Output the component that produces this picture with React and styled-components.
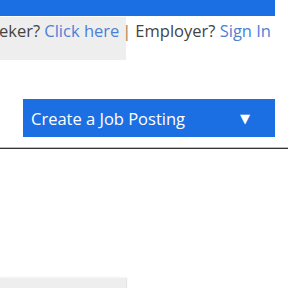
import styled, { createGlobalStyle } from "styled-components";

const GlobalStyle = createGlobalStyle`
  html, body { margin: 0; padding: 0; background: #fff; overflow: hidden; }
  body { font-family: "Open Sans", "DejaVu Sans", sans-serif; }
`;

const Page = styled.div`
  width: 288px;
  height: 288px;
  display: flex;
  flex-direction: column;
  overflow: hidden;
`;

const TopBar = styled.div`
  width: 275px;
  height: 16px;
  background: #1b6fe3;
  flex-shrink: 0;
`;

const Header = styled.div`
  display: grid;
  height: 44px;
  margin-top: 1px;
  & > * { grid-area: 1 / 1; }
`;

const Panel = styled.div`
  width: 126px;
  height: 43px;
  background: #eeeeee;
`;

const Links = styled.div`
  width: 271px;
  display: flex;
  justify-content: flex-end;
  white-space: nowrap;
  font-size: 16.5px;
  color: #444;
  padding-top: 3px;
  line-height: 22px;
`;

const Link = styled.a`
  color: #4d7fd6;
  text-decoration: none;
  cursor: pointer;
`;

const Sep = styled.span`
  color: #8a7f55;
  margin: 0 4px 0 3px;
`;

const ButtonRow = styled.div`
  display: flex;
  padding: 38px 13px 0 23px;
`;

const Dropdown = styled.button`
  flex: 1;
  height: 38px;
  background: #1b6fe3;
  border: none;
  color: #fff;
  font-family: inherit;
  font-size: 16.5px;
  display: flex;
  align-items: center;
  justify-content: space-between;
  padding: 0 25px 0 8px;
  cursor: pointer;
`;

const Arrow = styled.span`
  font-size: 13px;
`;

const Rule = styled.hr`
  margin: 10px 0 0;
  border: none;
  border-top: 1px solid #bdbdbd;
  border-bottom: 1px solid #333;
  height: 0;
`;

const Spacer = styled.div`
  flex: 1;
`;

const Footer = styled.div`
  width: 126px;
  height: 10px;
  background: #eeeeee;
  box-shadow: 0 -1px 2px rgba(0, 0, 0, 0.05);
  border-right: 1px solid #e4e4e4;
  flex-shrink: 0;
`;

export default function App() {
  return (
    <>
      <GlobalStyle />
      <Page>
        <TopBar />
        <Header>
          <Panel />
          <Links>
            Job Seeker?&nbsp;<Link>Click here</Link>
            <Sep>|</Sep>Employer?&nbsp;<Link>Sign In</Link>
          </Links>
        </Header>
        <ButtonRow>
          <Dropdown>
            Create a Job Posting
            <Arrow>▼</Arrow>
          </Dropdown>
        </ButtonRow>
        <Rule />
        <Spacer />
        <Footer />
      </Page>
    </>
  );
}
